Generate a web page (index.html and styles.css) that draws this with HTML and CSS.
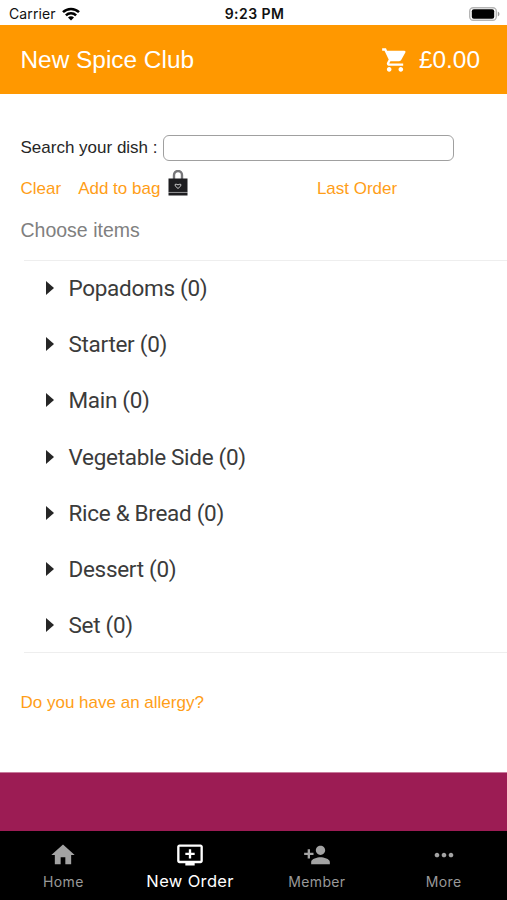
FILE: index.html
```html
<!DOCTYPE html>
<html lang="en">
<head>
<meta charset="utf-8">
<title>New Spice Club</title>
<link rel="stylesheet" href="styles.css">
</head>
<body>
<div class="status">
  <div class="carrier"><span>Carrier</span>
    <svg class="wifi" viewBox="0 0 18 14"><g fill="none" stroke="#000" stroke-width="2.5"><path d="M1 5.200a11.300 11.300 0 0 1 16 0"/><path d="M3.900 8.300a7.200 7.200 0 0 1 10.200 0"/></g><path d="M9 13.600l-3-3.100a4.200 4.200 0 0 1 6 0z"/></svg>
  </div>
  <div class="time">9:23 PM</div>
  <div class="power"><svg class="battery" viewBox="0 0 31 14"><rect x=".7" y=".7" width="26.600" height="12.600" rx="3.500" fill="#fff" stroke="#b5b5b5" stroke-width="1.400"/><rect x="2.800" y="2.300" width="22.400" height="9.400" rx="2"/><path d="M28.800 4.500q1.700.8 1.700 2.500t-1.700 2.500z" fill="#999"/></svg></div>
</div>
<header class="header">
  <h1>New Spice Club</h1>
  <div class="cart">
    <svg viewBox="0 0 24 24"><path fill="#fff" d="M7 18c-1.100 0-1.990.9-1.990 2S5.900 22 7 22s2-.9 2-2-.9-2-2-2zM1 2v2h2l3.600 7.590-1.350 2.450c-.16.28-.25.61-.25.96 0 1.100.9 2 2 2h12v-2H7.420c-.14 0-.25-.11-.25-.25l.03-.12.9-1.630h7.450c.75 0 1.410-.41 1.750-1.030l3.580-6.490A1 1 0 0 0 20.010 4H5.210l-.94-2H1zm16 16c-1.100 0-1.990.9-1.990 2s.89 2 1.990 2 2-.9 2-2-.9-2-2-2z"/></svg>
    <span>£0.00</span>
  </div>
</header>
<main class="content">
  <div class="search"><label for="dish">Search your dish :</label><input id="dish" type="text"></div>
  <div class="actions">
    <a>Clear</a><a class="add">Add to bag</a>
    <svg class="bag" viewBox="0 0 20 26"><path d="M6 9V5a4 4 0 0 1 8 0v4" fill="none" stroke="#77777a" stroke-width="2.400"/><path d="M.5 8.500h19v13.500H.5zM.5 22.700h19v2.800H.5z" fill="#1d1d20"/><path d="M.5 22.400h19" stroke="#77777a" stroke-width=".8"/><path d="M10 18.500l-2.800-2.600v-1.600h1.700l1.100.7 1.100-.7h1.700v1.600z" fill="none" stroke="#ccc"/></svg>
    <a class="last">Last Order</a>
  </div>
  <h2>Choose items</h2>
  <ul class="menu">
    <li>Popadoms (0)</li>
    <li>Starter (0)</li>
    <li>Main (0)</li>
    <li>Vegetable Side (0)</li>
    <li>Rice &amp; Bread (0)</li>
    <li>Dessert (0)</li>
    <li>Set (0)</li>
  </ul>
  <a class="allergy">Do you have an allergy?</a>
</main>
<div class="band"></div>
<nav class="tabs">
  <div class="tab"><svg viewBox="0 0 24 24"><path d="M10 20v-6h4v6h5v-8h3L12 3 2 12h3v8z"/></svg><span>Home</span></div>
  <div class="tab active"><svg viewBox="0 0 24 24"><path d="M21 3H3c-1.110 0-2 .89-2 2v12c0 1.100.89 2 2 2h5v2h8v-2h5c1.100 0 1.990-.9 1.990-2L23 5c0-1.110-.9-2-2-2zm0 14H3V5h18v12zm-5-7v2h-3v3h-2v-3H8v-2h3V7h2v3h3z"/></svg><span>New Order</span></div>
  <div class="tab"><svg viewBox="0 0 24 24"><path d="M15 12c2.210 0 4-1.790 4-4s-1.790-4-4-4-4 1.790-4 4 1.790 4 4 4zm-9-2V7H4v3H1v2h3v3h2v-3h3v-2H6zm9 4c-2.670 0-8 1.340-8 4v2h16v-2c0-2.660-5.330-4-8-4z"/></svg><span>Member</span></div>
  <div class="tab"><svg viewBox="0 0 24 24"><path d="M6 10c-1.100 0-2 .9-2 2s.9 2 2 2 2-.9 2-2-.9-2-2-2zm12 0c-1.100 0-2 .9-2 2s.9 2 2 2 2-.9 2-2-.9-2-2-2zm-6 0c-1.100 0-2 .9-2 2s.9 2 2 2 2-.9 2-2-.9-2-2-2z"/></svg><span>More</span></div>
</nav>
</body>
</html>
```
FILE: styles.css
```css
* { box-sizing: border-box; }
body {
  margin: 0;
  height: 900px;
  display: flex;
  flex-direction: column;
  background: #fff;
  color: #262626;
  font-family: "Liberation Sans", Arial, sans-serif;
  font-size: 17px;
  overflow: hidden;
}
.status {
  height: 25px;
  padding: 2px 7px 0 9px;
  display: grid;
  grid-template-columns: 1fr auto 1fr;
  align-items: center;
  font: 14px/20px Inter, sans-serif;
  color: #111;
}
.carrier { display: flex; align-items: center; gap: 6px; }
.carrier span { letter-spacing: .1px; }
.wifi { width: 18px; height: 14px; }
.time { font-weight: 600; letter-spacing: .45px; }
.power { display: flex; justify-content: flex-end; }
.battery { width: 31px; height: 14px; }
.header {
  height: 69px;
  padding: 0 27px 0 20.500px;
  display: flex;
  align-items: center;
  justify-content: space-between;
  background: #ff9800;
  color: #fff;
}
h1 { margin: 0; font-size: 24.400px; font-weight: 400; line-height: 30px; }
.cart { display: flex; align-items: center; gap: 10px; font-size: 24.400px; }
.cart svg { width: 28px; height: 28px; }
.content { height: 678px; padding-left: 20.500px; padding-top: 41px; }
.search { display: flex; align-items: center; height: 26px; }
.search label { width: 142px; margin-top: -1px; }
.search input {
  width: 291px;
  height: 26px;
  border: 1.500px solid #a0a0a0;
  border-radius: 6px;
  background: #fff;
}
.actions { display: flex; align-items: center; height: 20px; margin-top: 18px; color: #ff9e17; }
.add { margin-left: 17px; }
.bag { width: 20px; height: 26px; margin: -13px 0 0 7.500px; }
.last { margin-left: 129px; }
h2 { margin: 19px 0 0; font-size: 19.500px; font-weight: 400; line-height: 24px; color: #808080; }
.menu {
  list-style: none;
  margin: 18px 0 0 3px;
  padding: 0 0 0 22px;
  height: 393px;
  border-top: 1px solid #eee;
  border-bottom: 1px solid #eee;
  font: 22.500px/56.200px Roboto, sans-serif;
  letter-spacing: -.3px;
  color: #3b3b3b;
}
.menu li { display: flex; align-items: center; height: 56.200px; position: relative; top: -1px; }
.menu li::before {
  content: "";
  margin-right: 15px;
  border-left: 8px solid #262626;
  border-top: 7px solid transparent;
  border-bottom: 7px solid transparent;
}
.allergy { display: block; margin-top: 40px; line-height: 20px; color: #ff9e17; }
.band { height: 59px; background: #9c1c54; border-top: 1px solid #c77a9b; }
.tabs { height: 69px; display: grid; grid-template-columns: repeat(4, 1fr); background: #000; }
.tab {
  display: flex;
  flex-direction: column;
  align-items: center;
  padding-top: 10px;
  font: 14px/20px Inter, sans-serif;
  letter-spacing: .35px;
  color: #999;
}
.tab svg { width: 28px; height: 28px; fill: #a3a3a3; margin-bottom: 3px; }
.tab.active { font-size: 16.500px; color: #fff; }
.tab.active svg { fill: #fff; margin-bottom: 2px; }
```
